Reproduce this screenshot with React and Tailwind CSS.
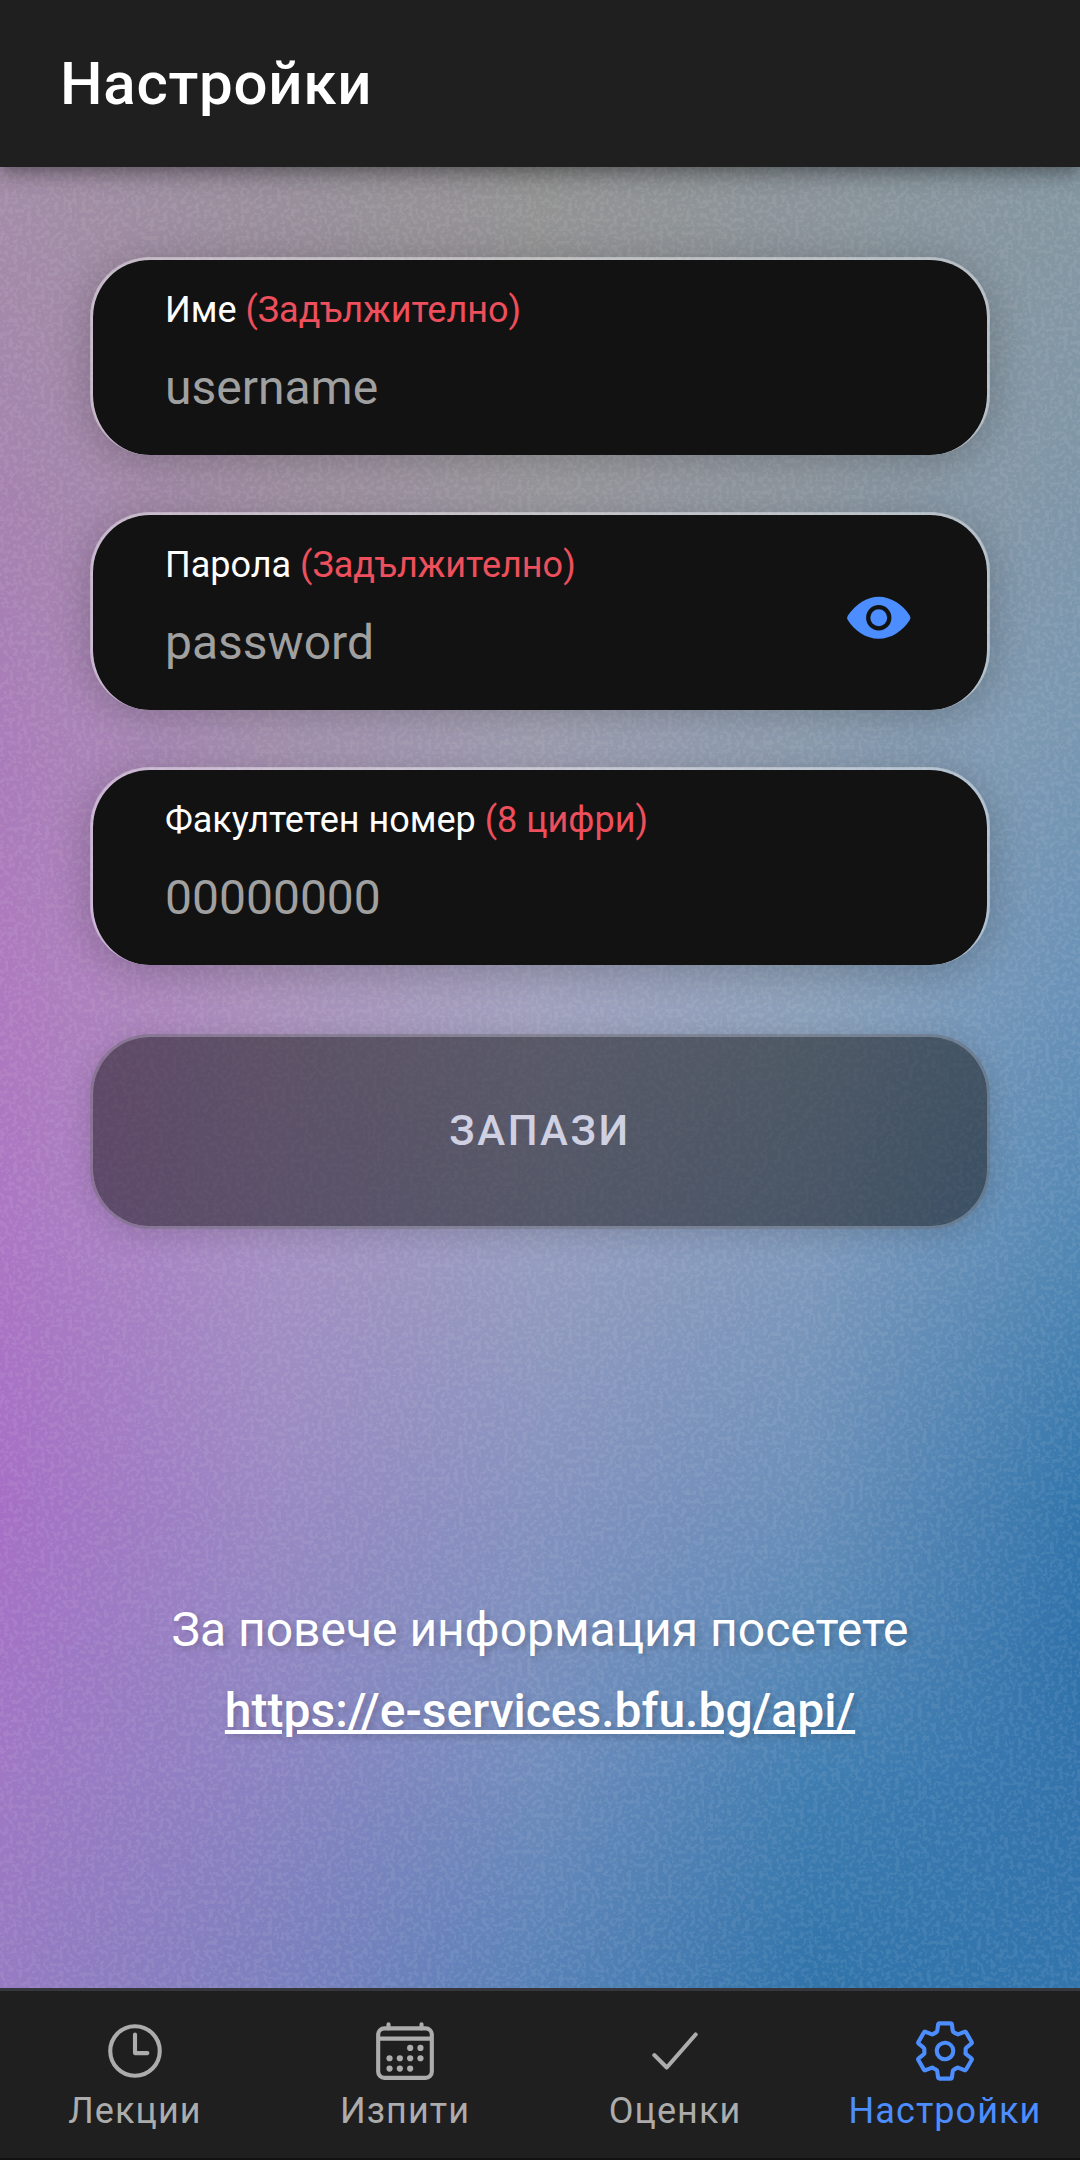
import {
  IoTimeOutline,
  IoCalendarOutline,
  IoCheckmarkOutline,
  IoSettingsOutline,
  IoEye,
} from "react-icons/io5";

// Each stop is a horizontal band of the wallpaper; bands fade into each other vertically.
const bands = [
  { y: 167, colors: ["#a48ea8", "#988f9b", "#929292", "#8b949a", "#8597a1"] },
  { y: 480, colors: ["#a583af", "#a190a3", "#9b9a9f", "#9099a2", "#7f96a8"] },
  { y: 740, colors: ["#aa7cba", "#a793b2", "#a0a0b3", "#8e9fb2", "#7897b2"] },
  { y: 1010, colors: ["#ae79bf", "#aa91bb", "#a1a1be", "#8ba0b9", "#6891b8"] },
  { y: 1270, colors: ["#ab75c4", "#a48fc3", "#949cbf", "#7d98bb", "#4f86b3"] },
  { y: 1500, colors: ["#a66fc5", "#9a89c3", "#8592bf", "#6a8fb9", "#3376ac"] },
  { y: 1640, colors: ["#a373c5", "#9287c3", "#7b90be", "#5989b7", "#3072aa"] },
  { y: 1780, colors: ["#9f78c4", "#8a83c2", "#6f8cbc", "#407eb1", "#3373ac"] },
  { y: 1988, colors: ["#967bc2", "#7c80be", "#5782b7", "#3174aa", "#3375ad"] },
];

function Wallpaper() {
  return (
    <div className="absolute inset-0">
      {bands.map((band, i) => {
        const mask =
          i === 0
            ? undefined
            : `linear-gradient(to bottom, transparent ${bands[i - 1].y}px, black ${band.y}px)`;
        return (
          <div
            key={band.y}
            className="absolute inset-0"
            style={{
              backgroundImage: `linear-gradient(to right, ${band.colors.join(", ")})`,
              maskImage: mask,
            }}
          />
        );
      })}
      <svg className="absolute inset-0 h-full w-full" aria-hidden="true">
        <filter id="grain" x="0" y="0" width="100%" height="100%">
          <feTurbulence type="fractalNoise" baseFrequency="0.22" numOctaves="2" seed="4" />
          <feColorMatrix values="0 0 0 0 1  0 0 0 0 1  0 0 0 0 1  9 0 0 0 -4.4" />
        </filter>
        <rect width="100%" height="100%" filter="url(#grain)" opacity="0.07" />
      </svg>
    </div>
  );
}

function Field({ label, hint, placeholder, children }) {
  return (
    <div className="flex h-[198px] items-center justify-between rounded-[60px] border-x-[3px] border-t-[3px] border-white/40 bg-[#121212] bg-clip-padding pr-[75px] pl-[72px] shadow-[0_6px_42px_rgba(0,0,0,0.22)]">
      <div className="flex h-full flex-col pt-[29px]">
        <label className="text-[36px] leading-[42px] text-white">
          {label} <span className="text-[#ed4f5c]">{hint}</span>
        </label>
        <span className="mt-[29px] text-[48px] leading-[56px] text-[#a0a0a0]">{placeholder}</span>
      </div>
      {children}
    </div>
  );
}

function Tab({ icon: Icon, label, active }) {
  return (
    <div
      className={
        "flex flex-1 flex-col items-center pt-[27px] " +
        (active ? "text-[#4c8dff]" : "text-[#acacac]")
      }
    >
      <Icon size={66} />
      <span className="mt-[6px] text-[36px] leading-[42px] tracking-[1.08px]">{label}</span>
    </div>
  );
}

export default function App() {
  return (
    <div className="relative flex h-[2160px] w-[1080px] flex-col overflow-hidden font-['Roboto',sans-serif]">
      <Wallpaper />
      <header className="relative flex h-[167px] items-center bg-[#1f1f1f] px-[60px] shadow-[0_6px_12px_-3px_rgba(0,0,0,0.2),0_12px_15px_0_rgba(0,0,0,0.14),0_3px_30px_0_rgba(0,0,0,0.12)]">
        <h1 className="text-[60px] leading-[70px] font-medium tracking-[0.75px] text-white">Настройки</h1>
      </header>

      <main className="relative flex flex-1 flex-col px-[90px] pt-[90px]">
        <div className="flex flex-col gap-[57px]">
          <Field label="Име" hint="(Задължително)" placeholder="username" />
          <Field label="Парола" hint="(Задължително)" placeholder="password">
            <IoEye size={67.5} className="mt-[10px] text-[#4c8dff]" />
          </Field>
          <Field label="Факултетен номер" hint="(8 цифри)" placeholder="00000000" />
        </div>
        <button className="mt-[69px] h-[195px] rounded-[60px] border-[3px] border-[#65656b]/50 bg-[#121212]/50 bg-clip-padding pb-[2px] text-[42px] font-medium tracking-[2.52px] text-[#cfd0e2] shadow-[0_6px_30px_rgba(0,0,0,0.14)]">
          ЗАПАЗИ
        </button>
        <p className="mt-[360px] text-center text-[48px] leading-[81px] text-white [text-shadow:3px_3px_6px_rgba(0,0,0,0.2)]">
          За повече информация посетете
          <br />
          <a className="font-medium underline">https://e-services.bfu.bg/api/</a>
        </p>
      </main>

      <nav className="relative flex h-[172px] border-t-[3px] border-b-2 border-t-[#36373c] border-b-[#111111] bg-[#1f1f1f]">
        <Tab icon={IoTimeOutline} label="Лекции" />
        <Tab icon={IoCalendarOutline} label="Изпити" />
        <Tab icon={IoCheckmarkOutline} label="Оценки" />
        <Tab icon={IoSettingsOutline} label="Настройки" active />
      </nav>
    </div>
  );
}
